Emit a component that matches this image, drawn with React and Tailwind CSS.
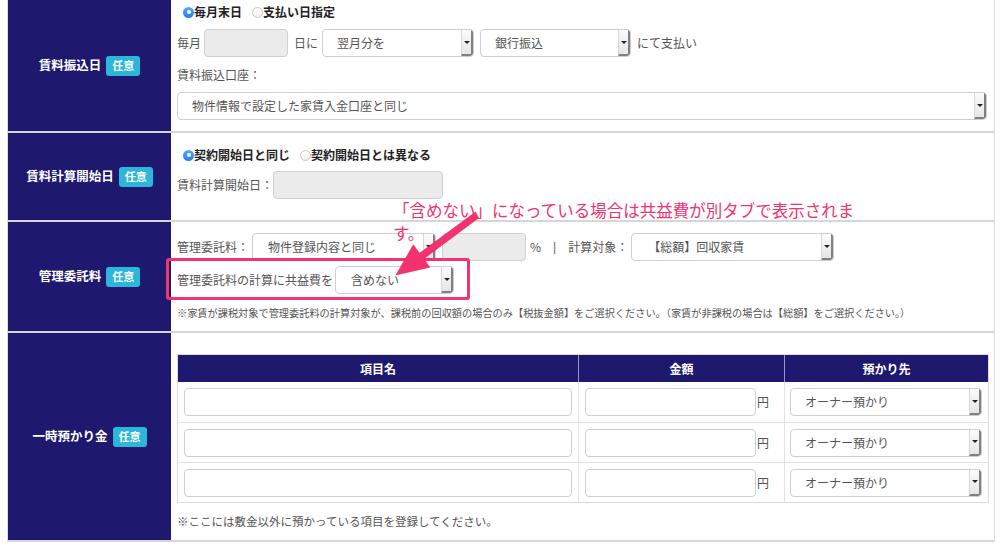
import React from "react";

const NAVY = "bg-[#1e186f]";

function Badge() {
  return (
    <span className="inline-flex items-center justify-center h-[20px] px-[6px] rounded-[3px] bg-[#2bb6da] text-white text-[11px] font-bold leading-none">
      任意
    </span>
  );
}

function Label({ text }) {
  return (
    <div className={`w-[163px] shrink-0 ${NAVY} flex items-center justify-center gap-[5px]`}>
      <span className="text-white text-[12.5px] font-bold leading-none">{text}</span>
      <Badge />
    </div>
  );
}

function Arrow() {
  return (
    <div className="w-[12px] h-full shrink-0 bg-gradient-to-b from-[#fbfbfb] to-[#e6e6e6] border-l border-[#d8d8d8] border-r-2 border-b-2 border-r-[#808080] border-b-[#808080] rounded-br-[3px] flex items-center justify-center">
      <div className="w-0 h-0 border-x-[3px] border-x-transparent border-t-[3px] border-t-[#222]" />
    </div>
  );
}

function Select({ w, text, pl = "pl-[14px]" }) {
  return (
    <div className={`${w} h-[28px] shrink-0 flex border border-[#cfcfcf] rounded-[4px] bg-white overflow-hidden`}>
      <span className={`flex-1 ${pl} flex items-center text-[12px] text-[#555] leading-none whitespace-nowrap`}>{text}</span>
      <Arrow />
    </div>
  );
}

function GrayInput({ w }) {
  return <div className={`${w} h-[28px] shrink-0 bg-[#ebebeb] border border-[#cfcfcf] rounded-[4px]`} />;
}

function WhiteInput({ w }) {
  return <div className={`${w} h-[28px] shrink-0 bg-white border border-[#cfcfcf] rounded-[4px]`} />;
}

function Radio({ on, cls = "" }) {
  return on ? (
    <span className={`w-[11px] h-[11px] rounded-full bg-gradient-to-b from-[#5aa8f8] to-[#1f7ef0] flex items-center justify-center shrink-0 ${cls}`}>
      <span className="w-[4px] h-[4px] rounded-full bg-white" />
    </span>
  ) : (
    <span className={`w-[11px] h-[11px] rounded-full bg-gradient-to-b from-[#ffffff] to-[#f0f0f0] border border-[#c8c8c8] flex shrink-0 ${cls}`} />
  );
}

function T({ children, cls = "" }) {
  return <span className={`text-[12px] text-[#555] leading-none whitespace-nowrap ${cls}`}>{children}</span>;
}

export default function App() {
  return (
    <div className="relative w-[1000px] h-[549px] bg-white overflow-hidden font-['Noto_Sans_CJK_JP','Noto_Sans',sans-serif]">
      <div className="ml-[7px] w-[988px] border-l border-r border-[#dedede]">
        {/* Row 1 */}
        <div className="flex h-[133px] border-b-2 border-[#d6d6d6]">
          <Label text="賃料振込日" />
          <div className="flex-1 pl-[6px] pt-[4px] flex flex-col">
            <div className="h-[16px] flex items-center pl-[6px]">
              <Radio on />
              <span className="text-[12px] font-bold text-[#222] leading-none">毎月末日</span>
              <Radio cls="ml-[10px]" />
              <span className="text-[12px] font-bold text-[#222] leading-none">支払い日指定</span>
            </div>
            <div className="mt-[9px] h-[28px] flex items-center">
              <T>毎月</T>
              <span className="ml-[3px]"><GrayInput w="w-[84px]" /></span>
              <T cls="ml-[6px]">日に</T>
              <span className="ml-[4px]"><Select w="w-[152px]" text="翌月分を" /></span>
              <span className="ml-[6px]"><Select w="w-[151px]" text="銀行振込" /></span>
              <T cls="ml-[6px]">にて支払い</T>
            </div>
            <div className="mt-[10px] h-[16px] flex items-center">
              <T>賃料振込口座：</T>
            </div>
            <div className="mt-[9px]">
              <Select w="w-[810px]" text="物件情報で設定した家賃入金口座と同じ" />
            </div>
          </div>
        </div>

        {/* Row 2 */}
        <div className="flex h-[89px] border-b-2 border-[#d6d6d6]">
          <Label text="賃料計算開始日" />
          <div className="flex-1 pl-[6px] pt-[14px] flex flex-col">
            <div className="h-[16px] flex items-center pl-[6px]">
              <Radio on />
              <span className="text-[12px] font-bold text-[#222] leading-none">契約開始日と同じ</span>
              <Radio cls="ml-[10px]" />
              <span className="text-[12px] font-bold text-[#222] leading-none">契約開始日とは異なる</span>
            </div>
            <div className="mt-[8px] h-[28px] flex items-center">
              <T>賃料計算開始日：</T>
              <GrayInput w="w-[170px]" />
            </div>
          </div>
        </div>

        {/* Row 3 */}
        <div className="flex h-[111px] border-b-2 border-[#d6d6d6]">
          <Label text="管理委託料" />
          <div className="flex-1 pl-[6px] pt-[11px] flex flex-col">
            <div className="h-[28px] flex items-center">
              <T>管理委託料：</T>
              <span className="ml-[3px]"><Select w="w-[184px]" text="物件登録内容と同じ" pl="pl-[15px]" /></span>
              <span className="ml-[6px]"><GrayInput w="w-[84px]" /></span>
              <T cls="ml-[4px]">%</T>
              <T cls="ml-[12px] font-['Liberation_Sans',sans-serif] text-[#666]">|</T>
              <T cls="ml-[12px]">計算対象：</T>
              <span className="ml-[3px]"><Select w="w-[203px]" text="【総額】回収家賃" pl="pl-[16px]" /></span>
            </div>
            <div className="mt-[5px] h-[28px] flex items-center">
              <T>管理委託料の計算に共益費を</T>
              <span className="ml-[2px]"><Select w="w-[119px]" text="含めない" pl="pl-[15px]" /></span>
            </div>
            <div className="mt-[12px] h-[14px] flex items-center">
              <span className="text-[10.2px] text-[#555] leading-none whitespace-nowrap">
                ※家賃が課税対象で管理委託料の計算対象が、課税前の回収額の場合のみ【税抜金額】をご選択ください。（家賃が非課税の場合は【総額】をご選択ください。）
              </span>
            </div>
          </div>
        </div>

        {/* Row 4 */}
        <div className="flex h-[209px] border-b-2 border-[#d6d6d6]">
          <Label text="一時預かり金" />
          <div className="flex-1 pl-[6px] pt-[21px] flex flex-col">
            <div className="w-[812px] border border-[#dcdcdc]">
              <div className={`flex h-[27px] ${NAVY}`}>
                <div className="w-[401px] flex items-center justify-center text-white text-[12px] font-bold leading-none border-r border-[#9a98c0]">項目名</div>
                <div className="w-[206px] flex items-center justify-center text-white text-[12px] font-bold leading-none border-r border-[#9a98c0]">金額</div>
                <div className="flex-1 flex items-center justify-center text-white text-[12px] font-bold leading-none">預かり先</div>
              </div>
              {[0, 1, 2].map((i) => (
                <div key={i} className={`flex h-[40px] ${i > 0 ? "border-t border-[#e2e2e2]" : ""}`}>
                  <div className="w-[401px] flex items-center px-[6px] border-r border-[#e2e2e2]">
                    <WhiteInput w="w-full" />
                  </div>
                  <div className="w-[206px] flex items-center pl-[6px] border-r border-[#e2e2e2]">
                    <WhiteInput w="w-[171px]" />
                    <T cls="ml-[1px]">円</T>
                  </div>
                  <div className="flex-1 flex items-center pl-[5px]">
                    <Select w="w-[192px]" text="オーナー預かり" pl="pl-[14px]" />
                  </div>
                </div>
              ))}
            </div>
            <div className="mt-[12px] h-[14px] flex items-center">
              <span className="text-[11.5px] text-[#555] leading-none whitespace-nowrap">
                ※ここには敷金以外に預かっている項目を登録してください。
              </span>
            </div>
          </div>
        </div>
      </div>

      {/* Annotation overlay */}
      <div className="absolute left-[166px] top-[258px] w-[304px] h-[42px] border-[3px] border-[#f3326f] rounded-[3px]" />
      <div className="absolute left-[393px] top-[199px] text-[16.5px] leading-[23px] text-[#f3326f] whitespace-nowrap">
        「含めない」になっている場合は共益費が別タブで表示されま
        <br />
        す。
      </div>
      <svg className="absolute left-0 top-0 pointer-events-none" width="1000" height="549" viewBox="0 0 1000 549">
        <polygon
          points="475.5,212 419.5,253.2 413.3,244.8 396,275 429.9,267.2 423.7,258.8 478.5,218"
          fill="#f3326f"
          stroke="#e02a62"
          strokeWidth="0.6"
          strokeLinejoin="round"
        />
      </svg>
    </div>
  );
}
